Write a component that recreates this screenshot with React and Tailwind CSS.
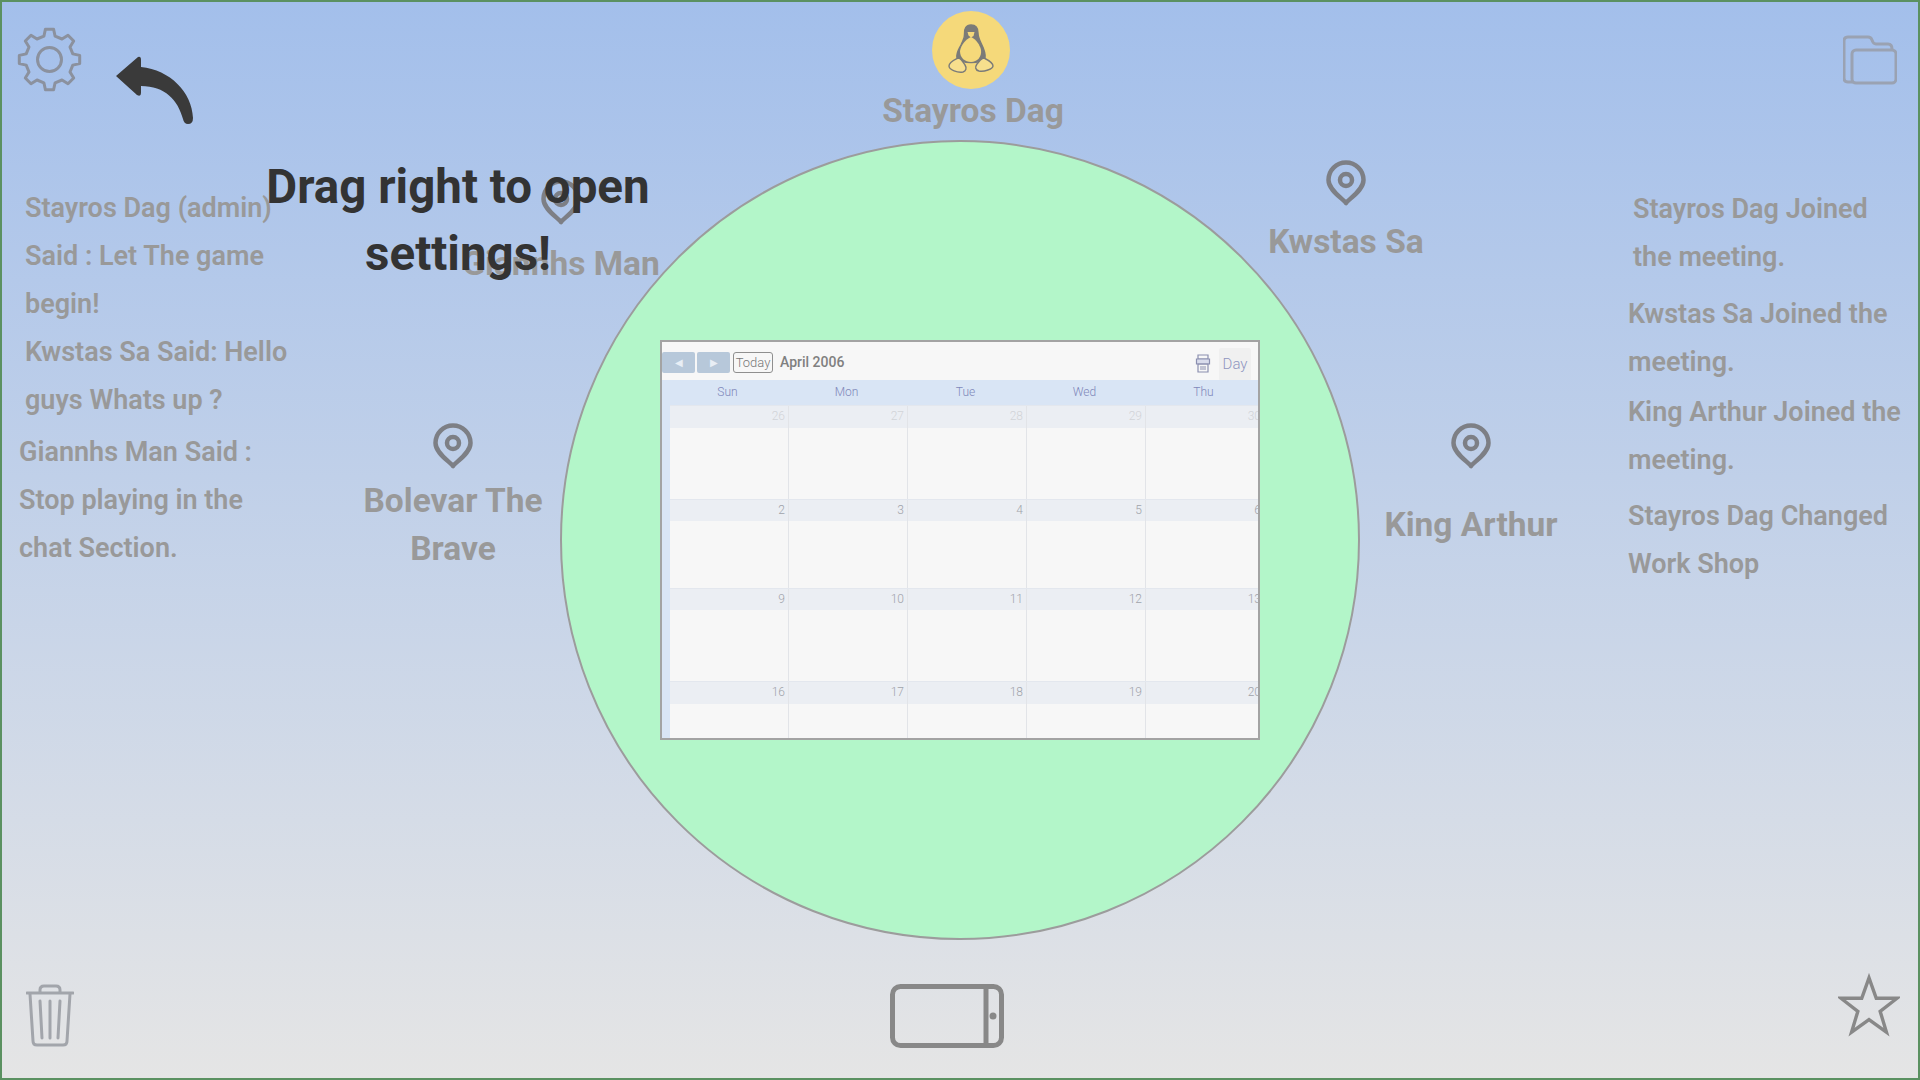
import React from 'react';

const gearPoints = () => {
  const pts = [];
  const teeth = 8;
  for (let i = 0; i < teeth; i++) {
    const a = (i / teeth) * Math.PI * 2 - Math.PI / 2;
    const step = (Math.PI * 2) / teeth;
    [[-0.3, 24], [-0.17, 30.5], [0.17, 30.5], [0.3, 24]].forEach(([off, r]) => {
      pts.push(`${(32.5 + r * Math.cos(a + off * step)).toFixed(1)},${(32.5 + r * Math.sin(a + off * step)).toFixed(1)}`);
    });
  }
  return pts.join(' ');
};

const Gear = () => (
  <svg width="65" height="65" viewBox="0 0 65 65" fill="none" stroke="#8b919e" strokeWidth="3" strokeLinejoin="round">
    <polygon points={gearPoints()} />
    <circle cx="32.5" cy="32.5" r="12" />
  </svg>
);

const BackArrow = () => (
  <svg width="80" height="72" viewBox="115 55 80 72" fill="#3a3a3a">
    <path d="M116 76 L138 57 Q141 56 141 60 L141 67 C170 70 192 92 193 118 Q193 124 188 124 Q184 124 183 119 C178 100 165 86 141 86 L141 93 Q141 97 137 95 Z" />
  </svg>
);

const Pin = () => (
  <svg width="40" height="46" viewBox="0 0 40 46" fill="none" stroke="#7d7f85" strokeWidth="4.5">
    <path d="M20 43 C16 38 2.5 30 2.5 20 A17.5 17.5 0 0 1 37.5 20 C37.5 30 24 38 20 43Z" strokeLinejoin="round" />
    <circle cx="20" cy="20" r="6" />
  </svg>
);

const Penguin = () => (
  <svg width="46" height="52" viewBox="0 0 46 52" fill="none" stroke="#7b7b78" strokeWidth="1.4" strokeLinejoin="round">
    <path d="M23 1 C18 1 16 5 16.500 10 C17 14 15 16 13 21 C11 25 8 29 9 34 C13 40 33 40 37 34 C38 29 35 23 33 19 C31 15 30 13 30 9 C30 4 28 1 23 1Z" fill="#7b7b78" />
    <path d="M23 13 C18 15 13 21 12 27 C12 34 17 38 23 38 C29 38 34 33 33 26 C32 21 28 15 23 13Z" fill="#f5d97a" stroke="none" />
    <path d="M19.500 8 L26.500 8 L25.500 12 L23 13.500 L20.500 11.500Z" fill="#f5d97a" stroke="none" />
    <path d="M10 34 C6 36 1 38 1 42 C1 46 10 49 15 48 C18 47 19 44 17 41 C15 38 13 34 10 34Z" fill="#f7df8d" />
    <path d="M36 34 C40 36 45 39 45 42 C45 45 36 48 31 47 C27 46 27 43 29 40 C31 38 33 34 36 34Z" fill="#f7df8d" />
  </svg>
);

const Printer = () => (
  <svg width="16" height="20" viewBox="0 0 16 20" fill="none" stroke="#8b8fb0" strokeWidth="1.2">
    <path d="M3 1h10v4H3z" />
    <path d="M1.500 5h13v5h-13z" fill="#d9dcec" />
    <path d="M3 10h10v8H3z" />
    <path d="M5 13h6M5 15h6" />
  </svg>
);

const Trash = () => (
  <svg width="48" height="63" viewBox="0 0 48 63" fill="none" stroke="#a2a5ab" strokeWidth="3" strokeLinecap="round">
    <path d="M1 9h46" />
    <path d="M14 8V6q0-4 4-4h12q4 0 4 4v2" />
    <path d="M4 10 L7 57 q0 4 4 4 h26 q4 0 4-4 L44 10" />
    <path d="M14 17 L16 54 M24 17 V54 M34 17 L32 54" />
  </svg>
);

const TabletIcon = () => (
  <svg width="114" height="64" viewBox="0 0 114 64" fill="none" stroke="#888888" strokeWidth="5">
    <rect x="2.500" y="2.500" width="109" height="59" rx="8" />
    <path d="M96 3 V61" />
    <circle cx="103" cy="32" r="3.500" fill="#888888" stroke="none" />
  </svg>
);

const Star = () => (
  <svg width="62" height="64" viewBox="0 0 64 64" fill="none" stroke="#888888" strokeWidth="3.500">
    <path d="M32 4 L39.500 25 L61 25 L43.500 38.500 L50 60 L32 47 L14 60 L20.500 38.500 L3 25 L24.500 25 Z" />
  </svg>
);

const Folder = () => (
  <svg width="54" height="50" viewBox="0 0 54 50" fill="none" stroke="#9aa2b2" strokeWidth="3" strokeLinejoin="round">
    <path d="M10 47 H5 q-4 0-4-4 V6 q0-4 4-4 h20 q3 0 4 3 q1 4 4 4 h12 q4 0 4 5" />
    <rect x="9" y="15" width="44" height="33" rx="4" />
  </svg>
);

const Seat = ({ name, className, pinClass = 'mb-[10px]', width = 'w-[240px]' }) => (
  <div className={`absolute flex flex-col items-center text-center ${width} ${className}`}>
    <div className={pinClass}><Pin /></div>
    <div className="text-[33.5px] font-bold leading-[48px] text-[#999999]">{name}</div>
  </div>
);

const WEEKDAYS = ['Sun', 'Mon', 'Tue', 'Wed', 'Thu'];
const ROWS = [
  { days: [26, 27, 28, 29, 30], height: 'h-[94px]', strip: 'h-[22px]', muted: true },
  { days: [2, 3, 4, 5, 6], height: 'h-[89px]', strip: 'h-[21px]' },
  { days: [9, 10, 11, 12, 13], height: 'h-[93px]', strip: 'h-[21px]' },
  { days: [16, 17, 18, 19, 20], height: 'h-[60px]', strip: 'h-[22px]' }
];

const Calendar = () => (
  <div className="w-[600px] h-[400px] border-2 border-[#a3a3a3] bg-[#f7f7f7] overflow-hidden flex flex-col">
    {/* Toolbar */}
    <div className="h-[38px] shrink-0 flex items-center pt-[3px] pr-[7px] bg-[#f7f7f7]">
      <div className="w-[33px] h-[21px] rounded-[2px] bg-[#b7c8da] flex items-center justify-center text-[#e8eef5] text-[10px]">◀</div>
      <div className="ml-[2px] w-[33px] h-[21px] rounded-[2px] bg-[#b7c8da] flex items-center justify-center text-[#e8eef5] text-[10px]">▶</div>
      <div className="ml-[3px] w-[40px] h-[21px] rounded-[3px] border border-[#8f8f8f] flex items-center justify-center text-[13px] text-[#777777] font-light">Today</div>
      <div className="ml-[7px] text-[14px] font-medium text-[#808080]">April 2006</div>
      <div className="ml-auto mr-[8px] mt-[2px]"><Printer /></div>
      <div className="w-[32px] h-[33px] mt-[4px] bg-[#f0f0f0] rounded-[2px] flex items-center justify-center text-[15px] font-light text-[#8f95bf]">Day</div>
    </div>
    {/* Weekdays */}
    <div className="h-[25px] shrink-0 bg-[#d9e5f5] flex pl-[6px]">
      {WEEKDAYS.map(d => (
        <div key={d} className="w-[119px] shrink-0 text-center text-[12px] font-light leading-[24px] text-[#7f88ba]">{d}</div>
      ))}
    </div>
    {/* Month grid */}
    <div className="flex-1 border-l-[8px] border-[#d9e5f5] overflow-hidden">
      {ROWS.map(row => (
        <div key={row.days[0]} className={`flex border-t border-[#e3e7ee] ${row.height}`}>
          {row.days.map(day => (
            <div key={day} className="w-[119px] shrink-0 border-r border-[#e2e4e8]">
              <div className={`${row.strip} bg-[#ebeef3] text-right pr-[3px] text-[12px] font-light leading-[20px] ${row.muted ? 'text-[#d2d4d8]' : 'text-[#a0a3aa]'}`}>{day}</div>
            </div>
          ))}
        </div>
      ))}
    </div>
  </div>
);

const CHAT_LEFT = [
  { text: 'Stayros Dag (admin) Said : Let The game begin!', cls: 'ml-[23px] w-[272px]' },
  { text: 'Kwstas Sa Said: Hello guys Whats up ?', cls: 'ml-[23px] w-[272px]' },
  { text: 'Giannhs Man Said : Stop playing in the chat Section.', cls: 'ml-[17px] w-[240px] mt-[4px]' }
];

const CHAT_RIGHT = [
  { text: 'Stayros Dag Joined the meeting.', cls: 'ml-[5px] w-[250px]' },
  { text: 'Kwstas Sa Joined the meeting.', cls: 'w-[285px] mt-[9px]' },
  { text: 'King Arthur Joined the meeting.', cls: 'w-[285px] mt-[2px]' },
  { text: 'Stayros Dag Changed Work Shop', cls: 'w-[285px] mt-[8px]' }
];

const ChatLine = ({ text, cls }) => (
  <p className={`text-[27px] font-semibold leading-[48px] text-[#999999] ${cls}`}>{text}</p>
);

export default function App() {
  return (
    <div className="relative w-full h-screen overflow-hidden flex border-2 border-[#5b9161] bg-gradient-to-b from-[#a3bfeb] to-[#e5e5e5] font-['Roboto',sans-serif]">
      {/* Left column */}
      <div className="w-[330px] shrink-0 flex flex-col">
        <div className="h-[157px] shrink-0 flex items-start pl-[15px] pt-[25px]">
          <Gear />
          <div className="ml-[33px] mt-[28px]"><BackArrow /></div>
        </div>
        <div className="relative z-0 pt-[25px]">
          {CHAT_LEFT.map(c => <ChatLine key={c.text} {...c} />)}
        </div>
        <div className="mt-auto pl-[24px] pb-[31px]"><Trash /></div>
      </div>

      {/* Table */}
      <div className="flex-1 flex items-center justify-center">
        <div className="w-[800px] h-[800px] shrink-0 rounded-full border-2 border-[#9c9c9c] bg-[#b3f6c9] flex items-center justify-center">
          <Calendar />
        </div>
      </div>

      {/* Right column */}
      <div className="w-[330px] shrink-0 flex flex-col">
        <div className="h-[157px] shrink-0 flex justify-end pr-[21px] pt-[33px]"><Folder /></div>
        <div className="pt-[26px] pl-[40px]">
          {CHAT_RIGHT.map(c => <ChatLine key={c.text} {...c} />)}
        </div>
        <div className="mt-auto flex justify-end pr-[18px] pb-[41px]"><Star /></div>
      </div>

      {/* Players around the table */}
      <div className="absolute left-[851px] top-[-2px] w-[240px] flex flex-col items-center text-center pt-[11px]">
        <div className="w-[78px] h-[78px] -ml-[5px] rounded-full bg-[#f5d97a] flex items-center justify-center"><Penguin /></div>
        <div className="text-[33.5px] font-bold leading-[48px] text-[#999999] -mt-[2px]">Stayros Dag</div>
      </div>
      <Seat name="Kwstas Sa" className="left-[1224px] top-[158px]" pinClass="mb-[12px]" />
      <Seat name="King Arthur" className="left-[1349px] top-[421px]" pinClass="mb-[32px]" />
      <Seat name="Bolevar The Brave" className="left-[351px] top-[421px]" pinClass="mb-[8px]" width="w-[200px]" />
      <Seat name="Giannhs Man" className="left-[439px] top-[177px]" pinClass="mb-[15px]" />

      {/* Hint */}
      <div className="absolute left-[226px] top-[152px] w-[460px] text-center text-[47.5px] font-bold leading-[67px] text-[#333333]">
        Drag right to open settings!
      </div>

      <div className="absolute left-[888px] top-[982px]"><TabletIcon /></div>
    </div>
  );
}
